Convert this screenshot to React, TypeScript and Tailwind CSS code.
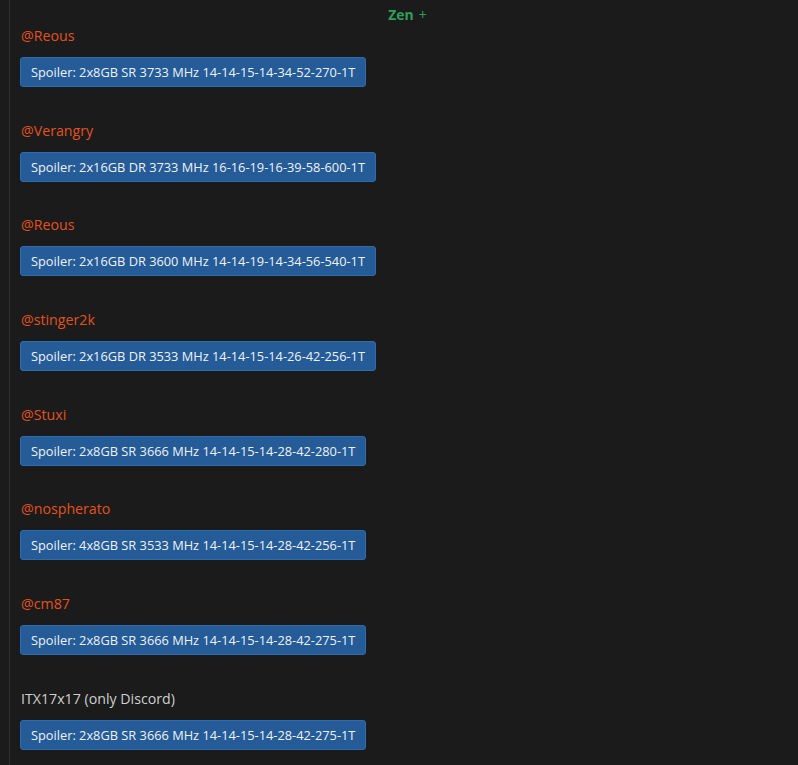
const entries = [
  { name: "@Reous", spec: "2x8GB SR 3733 MHz 14-14-15-14-34-52-270-1T", user: true },
  { name: "@Verangry", spec: "2x16GB DR 3733 MHz 16-16-19-16-39-58-600-1T", user: true },
  { name: "@Reous", spec: "2x16GB DR 3600 MHz 14-14-19-14-34-56-540-1T", user: true },
  { name: "@stinger2k", spec: "2x16GB DR 3533 MHz 14-14-15-14-26-42-256-1T", user: true },
  { name: "@Stuxi", spec: "2x8GB SR 3666 MHz 14-14-15-14-28-42-280-1T", user: true },
  { name: "@nospherato", spec: "4x8GB SR 3533 MHz 14-14-15-14-28-42-256-1T", user: true },
  { name: "@cm87", spec: "2x8GB SR 3666 MHz 14-14-15-14-28-42-275-1T", user: true },
  { name: "ITX17x17 (only Discord)", spec: "2x8GB SR 3666 MHz 14-14-15-14-28-42-275-1T", user: false },
];

export default function App() {
  return (
    <div
      className="min-h-[765px] bg-[#1b1b1b] pl-[9px]"
      style={{ fontFamily: '"Open Sans", "Noto Sans", sans-serif' }}
    >
      <div className="min-h-[765px] border-l border-[#303030] pl-[10px]">
        {/* Header */}
        <div className="pt-[6px] h-[26px] pr-[3px] text-center text-[14px] leading-[18px]">
          <span className="font-bold text-[#2ea05a]">Zen</span>
          <span className="ml-[5px] text-[#2ea05a]">+</span>
        </div>

        {entries.map((e, i) => (
          <div key={i} className="mb-[33.7px]">
            <p
              className={
                "pl-px text-[14.2px] leading-[20px] " +
                (e.user ? "text-[#e2521f]" : "text-[#cfcfcf]")
              }
            >
              {e.name}
            </p>
            <button className="mt-[11px] h-[30px] rounded-[3px] border border-[#2f6cab] bg-[#255b96] px-[10px] text-[12.8px] leading-[28px] text-[#eef2f7]">
              Spoiler: {e.spec}
            </button>
          </div>
        ))}
      </div>
    </div>
  );
}
